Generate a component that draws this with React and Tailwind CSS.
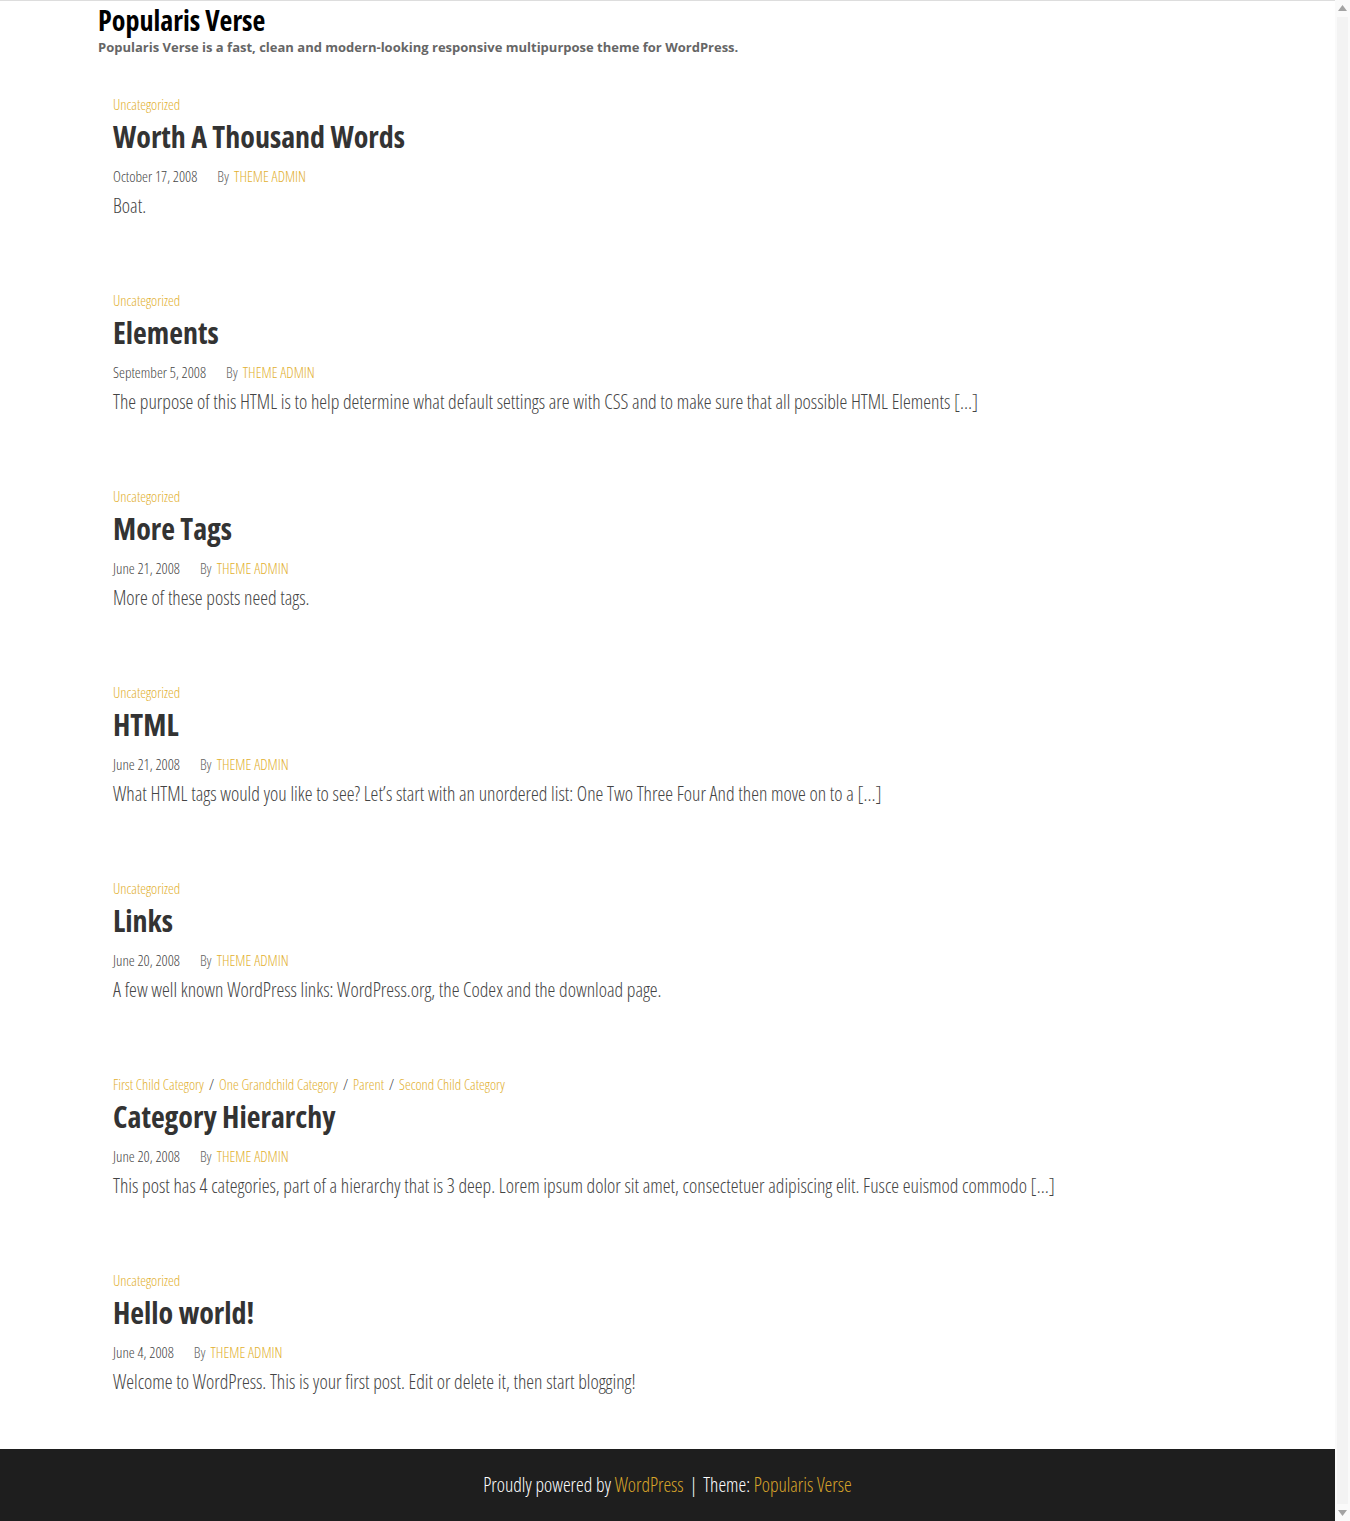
const posts = [
  {
    cats: ["Uncategorized"],
    title: "Worth A Thousand Words",
    date: "October 17, 2008",
    excerpt: "Boat.",
  },
  {
    cats: ["Uncategorized"],
    title: "Elements",
    date: "September 5, 2008",
    excerpt:
      "The purpose of this HTML is to help determine what default settings are with CSS and to make sure that all possible HTML Elements […]",
  },
  {
    cats: ["Uncategorized"],
    title: "More Tags",
    date: "June 21, 2008",
    excerpt: "More of these posts need tags.",
  },
  {
    cats: ["Uncategorized"],
    title: "HTML",
    date: "June 21, 2008",
    excerpt:
      "What HTML tags would you like to see? Let’s start with an unordered list: One Two Three Four And then move on to a […]",
  },
  {
    cats: ["Uncategorized"],
    title: "Links",
    date: "June 20, 2008",
    excerpt:
      "A few well known WordPress links: WordPress.org, the Codex and the download page.",
  },
  {
    cats: ["First Child Category", "One Grandchild Category", "Parent", "Second Child Category"],
    title: "Category Hierarchy",
    date: "June 20, 2008",
    excerpt:
      "This post has 4 categories, part of a hierarchy that is 3 deep. Lorem ipsum dolor sit amet, consectetuer adipiscing elit. Fusce euismod commodo […]",
  },
  {
    cats: ["Uncategorized"],
    title: "Hello world!",
    date: "June 4, 2008",
    excerpt: "Welcome to WordPress. This is your first post. Edit or delete it, then start blogging!",
  },
];

const Post = ({ post }) => (
  <article>
    <div className="flex items-center h-[20px] text-[14.6px] font-light leading-none">
      {post.cats.map((c, i) => (
        <span key={c} className="flex items-center">
          {i > 0 && <span className="text-[#333] mx-[5px]">/</span>}
          <a className="text-[#e2b030]">{c}</a>
        </span>
      ))}
    </div>
    <h2 className="mt-[5px] text-[30px] font-bold text-[#333] leading-[36px]">{post.title}</h2>
    <div className="mt-[11px] flex items-center h-[20px] text-[15px] font-light text-[#444] leading-none">
      <span>{post.date}</span>
      <span className="ml-[20px] text-[#666]">By</span>
      <a className="ml-[5px] text-[#e2b030] uppercase">THEME ADMIN</a>
    </div>
    <p className="mt-[8px] text-[19.7px] font-light text-[#444] leading-[24px]">{post.excerpt}</p>
  </article>
);

const Scrollbar = () => (
  <div className="w-[15px] bg-[#fafafa] flex flex-col items-center">
    <svg width="9" height="6" viewBox="0 0 9 6" className="mt-[5px]">
      <path d="M4.5 0 L9 6 L0 6 Z" fill="#a3a3a3" />
    </svg>
    <div className="flex-1 w-[11px] my-[6px] bg-[#f3f3f3]" />
    <svg width="9" height="6" viewBox="0 0 9 6" className="mb-[5px]">
      <path d="M0 0 L9 0 L4.5 6 Z" fill="#a3a3a3" />
    </svg>
  </div>
);

export default function App() {
  return (
    <div className="h-[1521px] overflow-hidden flex bg-white font-['Open_Sans',sans-serif] font-stretch-condensed">
      <div className="flex-1 min-w-0 flex flex-col border-t border-[#ddd]">
        <header className="px-[98px] pt-[1px]">
          <h1 className="text-[28px] font-bold text-black leading-[36px]">Popularis Verse</h1>
          <p className="text-[13px] font-bold text-[#666] leading-[18px] font-stretch-normal">
            Popularis Verse is a fast, clean and modern-looking responsive multipurpose theme for WordPress.
          </p>
        </header>
        <main className="flex-1 flex flex-col gap-[72px] px-[113px] pt-[38px] pb-[55px]">
          {posts.map((p) => (
            <Post key={p.title} post={p} />
          ))}
        </main>
        <footer className="bg-[#1e1e1e] h-[72px] shrink-0 pt-[23px] text-center text-[19.5px] font-light text-white leading-[26px]">
          Proudly powered by <a className="text-[#d9a52a]">WordPress</a>
          <span className="mx-[6px]">|</span>
          Theme: <a className="text-[#d9a52a]">Popularis Verse</a>
        </footer>
      </div>
      <Scrollbar />
    </div>
  );
}
